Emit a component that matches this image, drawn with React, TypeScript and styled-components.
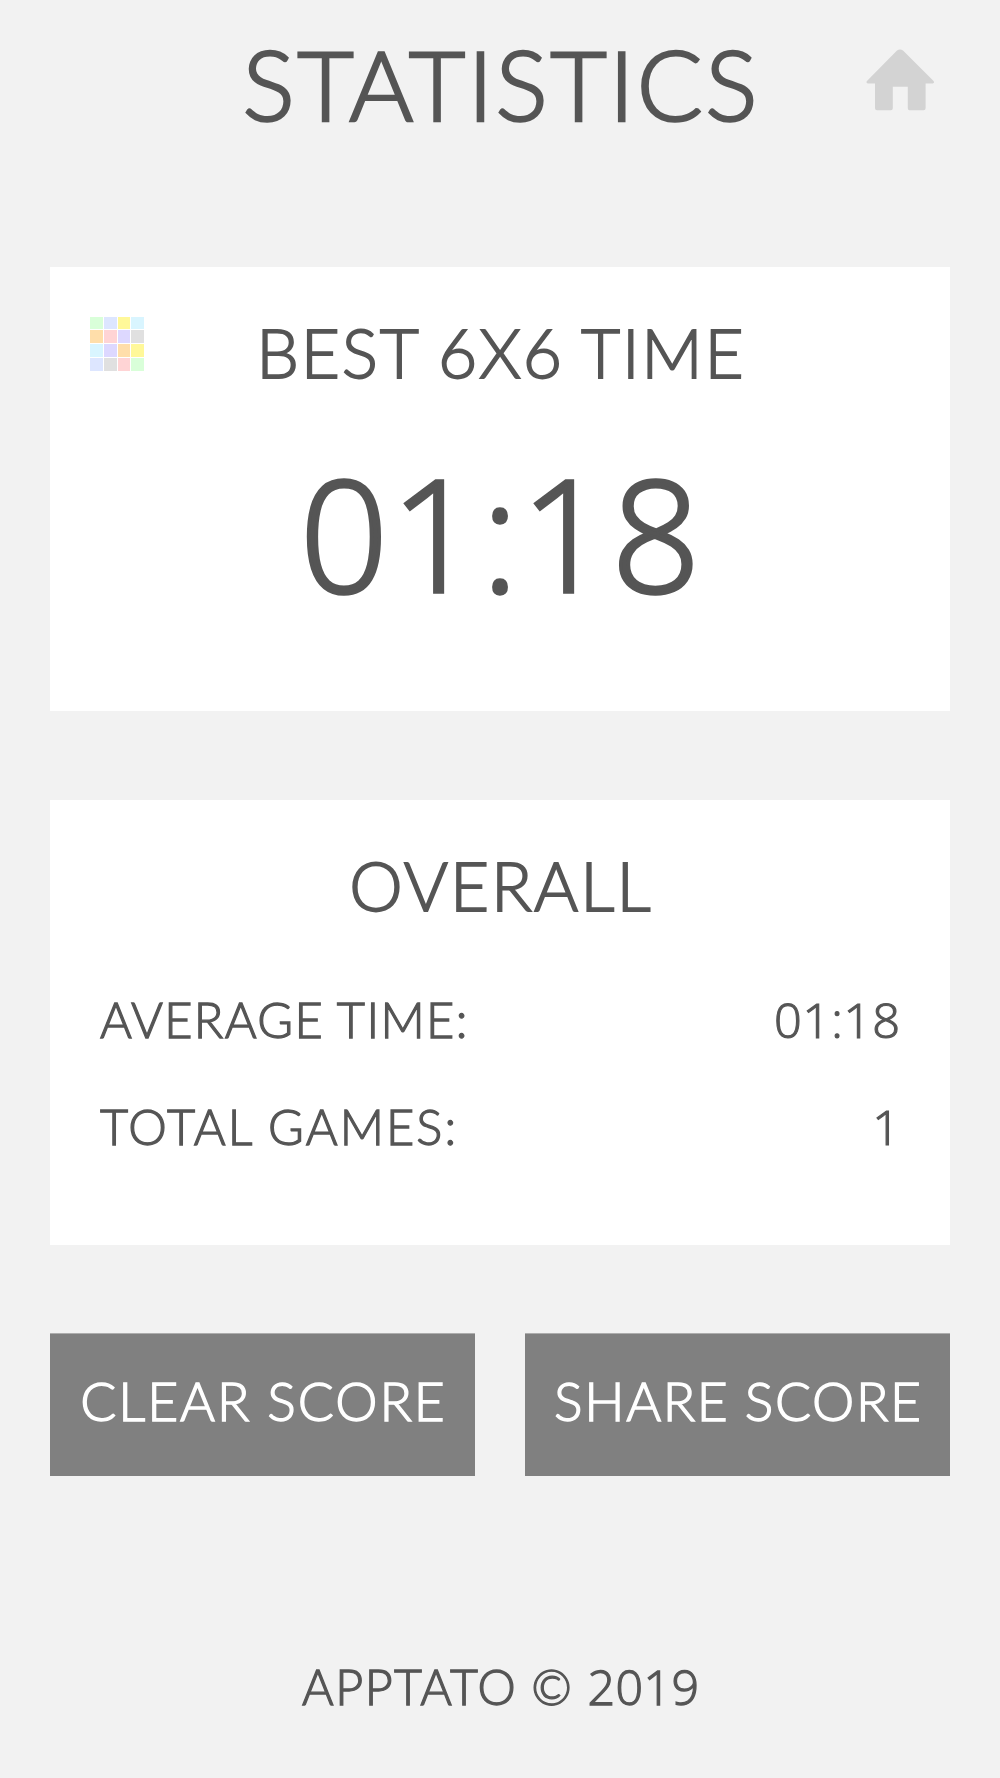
import React from "react";
import styled, { createGlobalStyle } from "styled-components";

const GlobalStyle = createGlobalStyle`
  * { box-sizing: border-box; }
  body { margin: 0; background: #f2f2f2; }
`;

const Screen = styled.main`
  width: 1000px;
  height: 1778px;
  display: flex;
  flex-direction: column;
  padding: 0 50px;
  background: #f2f2f2;
  color: #555;
`;

interface LabelProps {
  $size: number;
  $line: number;
  $track?: number;
  $digits?: boolean;
}

const Label = styled.span<LabelProps>`
  display: block;
  font-family: ${p => (p.$digits ? '"Open Sans"' : "Lato")}, "Liberation Sans", sans-serif;
  font-weight: 300;
  font-size: ${p => p.$size}px;
  line-height: ${p => p.$line}px;
  letter-spacing: ${p => p.$track ?? 0}px;
  margin-right: ${p => -(p.$track ?? 0)}px;
  word-spacing: -0.01em;
  -webkit-text-stroke: ${p => (p.$digits ? 0.023 : 0.026)}em currentColor;
  white-space: nowrap;
`;

const Figures = styled.span<{ $track: number }>`
  font-family: "Open Sans", sans-serif;
  letter-spacing: ${p => p.$track}px;
`;

const Header = styled.header`
  height: 267px;
  padding-top: 23px;
  display: grid;
  grid-template-columns: 1fr auto 1fr;
  align-items: start;
`;

const Title = styled.h1`
  grid-column: 2;
  margin: 0;
`;

const HomeButton = styled.button`
  justify-self: end;
  margin: 26px 15.5px 0 0;
  padding: 0;
  border: 0;
  background: none;
  line-height: 0;
`;

const Card = styled.section<{ $height: number }>`
  height: ${p => p.$height}px;
  padding: 45px 50px 0;
  display: flex;
  flex-direction: column;
  background: #fff;

  & + & {
    margin-top: 89px;
  }
`;

const CardHead = styled.div`
  display: grid;
  grid-template-columns: 1fr auto 1fr;
  align-items: start;
  margin-left: -10px;
  margin-right: -10px;
`;

const CardTitle = styled.h2`
  grid-column: 2;
  margin: 0;
`;

const Mosaic = styled.div`
  display: grid;
  grid-template-columns: repeat(4, 12.8px);
  grid-auto-rows: 12.8px;
  gap: 1px;
  margin-top: 4.5px;
`;

const Tile = styled.i<{ $color: string }>`
  background: ${p => p.$color};
`;

const BestTime = styled.div`
  display: flex;
  justify-content: center;
  margin-top: 51px;
`;

const StatList = styled.div`
  display: flex;
  flex-direction: column;
  gap: 46.5px;
  margin-top: 64px;
`;

const StatRow = styled.div`
  display: flex;
  justify-content: space-between;
`;

const Actions = styled.div`
  display: grid;
  grid-template-columns: 1fr 1fr;
  gap: 50px;
  margin-top: 88px;
`;

const ActionButton = styled.button`
  height: 143px;
  padding: 36px 0 0;
  border: 0;
  border-top: 1px solid #adadad;
  background: #808080;
  color: #fff;
  display: flex;
  justify-content: center;
  align-items: flex-start;
`;

const Footer = styled.footer`
  display: flex;
  justify-content: center;
  margin-top: 180px;
`;

const tiles = [
  "#d9ffd9", "#dde6ff", "#fff899", "#d9f5ff",
  "#ffdeaa", "#ffd4d5", "#ddd8ff", "#e0e0e0",
  "#d9f5ff", "#ddd8ff", "#ffdeaa", "#fff899",
  "#dde6ff", "#e0e0e0", "#ffd4d5", "#d9ffd9",
];

const HomeIcon = () => (
  <svg width="69" height="62" viewBox="0 0 69 62" fill="#d3d3d3">
    <path d="M31 1.6Q34 -0.6 37 1.6L67.3 31.8Q69.1 34 66.6 34.6H59.6V59.2Q59.6 61.2 57.6 61.2H43.6Q41.8 61.2 41.8 59.2V37.8H26.8V59.2Q26.8 61.2 24.8 61.2H11Q9 61.2 9 59.2V34.6H2Q-0.6 34 1.2 31.8Z" />
  </svg>
);

export default function App() {
  return (
    <>
      <GlobalStyle />
      <Screen>
        <Header>
          <Title><Label $size={97.6} $line={121} $track={2.4}>STATISTICS</Label></Title>
          <HomeButton aria-label="Home"><HomeIcon /></HomeButton>
        </Header>
        <Card $height={444}>
          <CardHead>
            <Mosaic>{tiles.map((c, i) => <Tile key={i} $color={c} />)}</Mosaic>
            <CardTitle><Label $size={67.6} $line={80} $track={1.75}>BEST 6X6 TIME</Label></CardTitle>
          </CardHead>
          <BestTime><Label $size={155} $line={178} $track={2.4} $digits>01:18</Label></BestTime>
        </Card>
        <Card $height={445}>
          <CardHead>
            <CardTitle><Label $size={67.5} $line={80} $track={2}>OVERALL</Label></CardTitle>
          </CardHead>
          <StatList>
            <StatRow>
              <Label $size={48.7} $line={60} $track={1.4}>AVERAGE TIME:</Label>
              <Label $size={48.7} $line={60} $track={0.8} $digits>01:18</Label>
            </StatRow>
            <StatRow>
              <Label $size={48.7} $line={60} $track={2.1}>TOTAL GAMES:</Label>
              <Label $size={48.7} $line={60} $digits>1</Label>
            </StatRow>
          </StatList>
        </Card>
        <Actions>
          <ActionButton><Label $size={53.4} $line={60} $track={1.95}>CLEAR SCORE</Label></ActionButton>
          <ActionButton><Label $size={53.4} $line={60} $track={1.6}>SHARE SCORE</Label></ActionButton>
        </Actions>
        <Footer>
          <Label $size={48.3} $line={60} $track={1.5}>APPTATO © <Figures $track={0.4}>2019</Figures></Label>
        </Footer>
      </Screen>
    </>
  );
}
